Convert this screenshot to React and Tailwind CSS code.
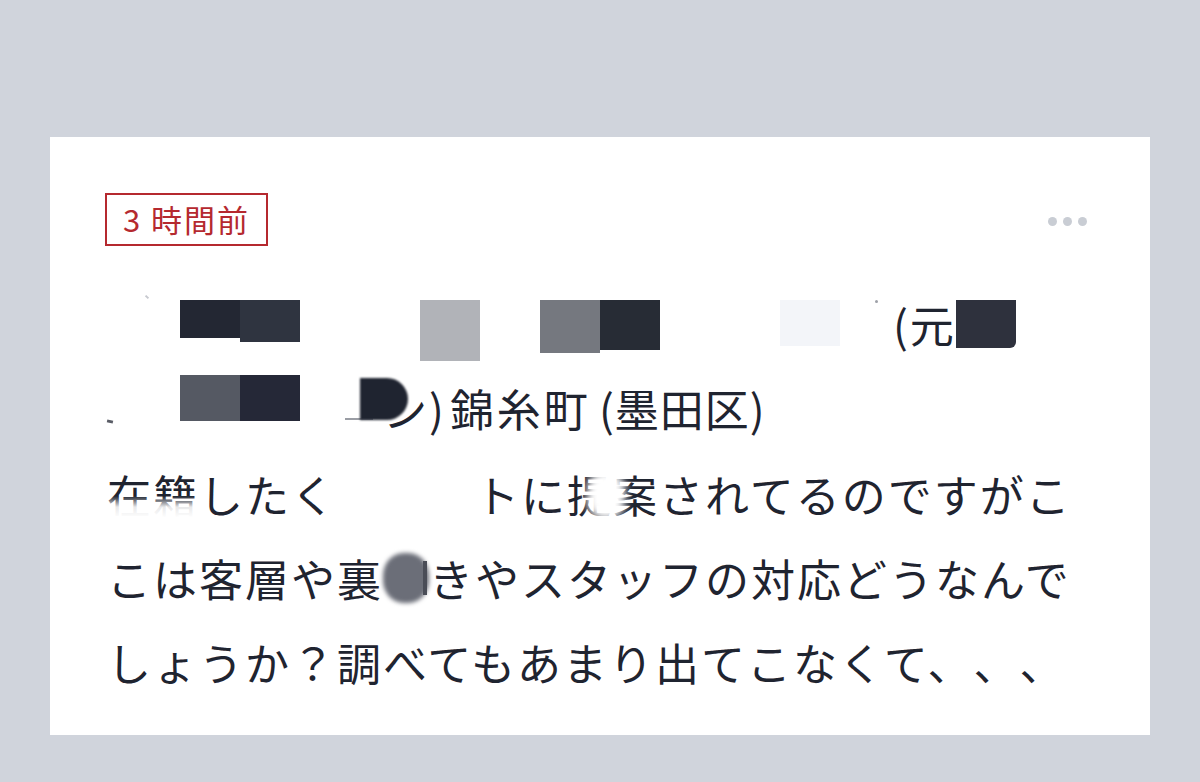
import React from "react";

const font = { fontFamily: '"Noto Sans CJK JP", "Noto Sans", sans-serif' };

// mosaic block made of two tiles
const Tile = ({ className }) => <span className={`inline-block shrink-0 ${className}`} />;

const Post = () => {
  return (
    <div className="bg-white w-[1100px] pl-[55px] pr-[63px] pt-[56px] pb-[31px]" style={font}>
      <div className="flex items-center justify-between">
        <div className="w-[163px] h-[53px] border-2 border-[#b5292f] text-[#b5292f] text-[31px] flex items-center justify-center tracking-[2px]">
          <span className="mr-[9px]">3</span>時間前
        </div>
        <div className="flex gap-[6px] mt-[4px]">
          <span className="w-[9px] h-[9px] rounded-full bg-[#c9cdd4]" />
          <span className="w-[9px] h-[9px] rounded-full bg-[#c9cdd4]" />
          <span className="w-[9px] h-[9px] rounded-full bg-[#c9cdd4]" />
        </div>
      </div>

      <div className="mt-[38px] pl-[2px] text-[44px] leading-[84px] tracking-[2px] text-[#1f2430] whitespace-nowrap [text-spacing-trim:space-all]">
        {/* line 1 */}
        <div className="flex h-[84px] items-start">
          <span className="mt-[12px] ml-[38px] w-[4px] h-[2px] bg-[#c7c9cf] rotate-45" />
          <div className="flex mt-[16px] ml-[31px]">
            <Tile className="w-[60px] h-[38px] bg-[#232733]" />
            <Tile className="w-[60px] h-[42px] bg-[#2f3440]" />
          </div>
          <Tile className="mt-[16px] ml-[120px] w-[60px] h-[61px] bg-[#b1b3b8]" />
          <div className="flex mt-[16px] ml-[60px]">
            <Tile className="w-[60px] h-[53px] bg-[#75787f]" />
            <Tile className="w-[60px] h-[50px] bg-[#272c35]" />
          </div>
          <Tile className="mt-[16px] ml-[120px] w-[60px] h-[46px] bg-[#f3f5f9]" />
          <span className="mt-[16px] ml-[35px] w-[3px] h-[3px] rounded-full bg-[#9ea1a8]" />
          <span className="ml-[15px] mt-[-2px]">(元</span>
          <Tile className="mt-[16px] w-[60px] h-[48px] bg-[#2e313d] rounded-br-[6px]" />
        </div>

        {/* line 2 */}
        <div className="flex h-[84px] items-start">
          <span className="mt-[52px] w-[6px] h-[3px] bg-[#5a5d66] rotate-12" />
          <div className="flex mt-[7px] ml-[67px]">
            <Tile className="w-[60px] h-[46px] bg-[#555963]" />
            <Tile className="w-[60px] h-[46px] bg-[#252837]" />
          </div>
          <span className="relative ml-[45px] mt-[-2px] pl-[38px]">
            <span className="absolute left-0 bottom-[30px] w-[28px] h-[2px] bg-[#9a9da4]" />
            <span className="absolute left-[15px] top-[12px] w-[48px] h-[42px] rounded-r-full bg-[#1f2430] blur-[1px]" />
            ン)
          </span>
          <span className="ml-[4px] mt-[-2px] tracking-[3px]">錦糸町</span>
          <span className="ml-[8px] mt-[-2px] tracking-[1px]">(墨田区)</span>
        </div>

        {/* line 3 */}
        <div className="flex h-[84px] items-center">
          <span className="relative">
            在籍
            <span className="absolute left-0 right-0 top-[44px] h-[22px] bg-gradient-to-b from-white/0 via-white/90 to-white" />
          </span>
          <span>したく</span>
          <span className="inline-block w-[138px]" />
          <span className="relative">
            トに提案
            <span className="absolute left-[112px] top-[18px] w-[38px] h-[50px] rounded-full bg-white blur-[4px]" />
          </span>
          <span>されてるのですがこ</span>
        </div>

        {/* line 4 */}
        <div className="flex h-[84px] items-center">
          <span>こは客層や裏</span>
          <span className="relative inline-block w-[46px] h-[54px]">
            <span className="absolute left-[0px] top-[2px] w-[46px] h-[50px] rounded-[45%] bg-[#6b6e78] blur-[2px]" />
            <span className="absolute right-[2px] top-[10px] w-[4px] h-[34px] bg-[#4a4d57]" />
          </span>
          <span>きやスタッフの対応どうなんで</span>
        </div>

        {/* line 5 */}
        <div className="flex h-[84px] items-center">
          <span>しょうか？調べてもあまり出てこなくて、、、</span>
        </div>
      </div>
    </div>
  );
};

export default function App() {
  return (
    <div className="w-[1200px] h-[782px] bg-[#d0d4dc] pt-[137px] pl-[50px]">
      <Post />
    </div>
  );
}
